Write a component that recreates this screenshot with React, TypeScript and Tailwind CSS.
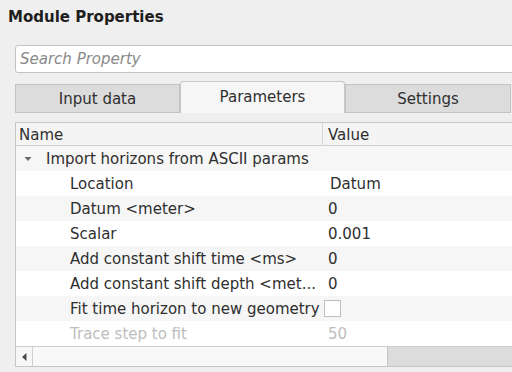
import React from 'react';

type Row = {
  name: string;
  value?: string;
  checkbox?: boolean;
  disabled?: boolean;
  valueIndent?: boolean;
};

const rows: Row[] = [
  { name: 'Location', value: 'Datum', valueIndent: true },
  { name: 'Datum <meter>', value: '0' },
  { name: 'Scalar', value: '0.001' },
  { name: 'Add constant shift time <ms>', value: '0' },
  { name: 'Add constant shift depth <met...', value: '0' },
  { name: 'Fit time horizon to new geometry', checkbox: true },
  { name: 'Trace step to fit', value: '50', disabled: true },
];

export default function App() {
  return (
    <div
      className="relative h-[372px] w-[512px] overflow-hidden bg-[#efefef] text-[15px] text-[#2f2f2f]"
      style={{ fontFamily: '"DejaVu Sans", "Liberation Sans", sans-serif' }}
    >
      <div className="px-[8px] pt-[7px] text-[15px] font-bold leading-[20px] text-[#1e1e1e]">
        Module Properties
      </div>

      <div className="ml-[15px] w-[520px]">
        {/* search */}
        <div className="mt-[18px] flex h-[28px] items-center rounded-[3px] border border-[#c3c3c3] bg-white px-[4px] pt-[1px]">
          <span className="italic text-[#8a8a8a]">Search Property</span>
        </div>

        {/* tabs */}
        <div className="mt-[8px] flex h-[32px] w-[496px] items-end">
          <div className="flex h-[29px] w-[165px] items-center justify-center border border-[#c2c2c2] bg-[#dcdcdc] pt-[2px] text-[#2f2f2f]">
            Input data
          </div>
          <div className="flex h-[32px] w-[165px] items-center justify-center rounded-t-[3px] border border-b-0 border-[#c9c9c9] bg-[#f6f6f6] text-[#2f2f2f]">
            Parameters
          </div>
          <div className="flex h-[29px] w-[166px] items-center justify-center border border-[#c2c2c2] bg-[#dcdcdc] pt-[2px] text-[#2f2f2f]">
            Settings
          </div>
        </div>

        {/* table */}
        <div className="mt-[9px] h-[245px] border border-[#c6c6c6] bg-white">
          <div className="flex h-[23px] border-b border-[#d0d0d0] bg-[#f4f4f4]">
            <div className="flex w-[307px] items-center border-r border-[#d6d6d6] pl-[3px] pt-[3px]">Name</div>
            <div className="flex items-center pl-[5px] pt-[3px]">Value</div>
          </div>

          <div className="flex h-[25px] items-center whitespace-nowrap bg-[#f6f6f6] pt-[2px]">
            <svg width="8" height="6" viewBox="0 0 8 6" className="ml-[8px] mr-[14px] mb-[2px] shrink-0">
              <path d="M0.5 1 L7.5 1 L4 5 Z" fill="#6a6a6a" />
            </svg>
            <span>Import horizons from ASCII params</span>
          </div>

          {rows.map((r, i) => (
            <div
              key={r.name}
              className={`flex h-[25px] items-center ${i % 2 === 1 ? 'bg-[#f6f6f6]' : 'bg-white'}`}
            >
              <div
                className={`w-[308px] shrink-0 overflow-hidden whitespace-nowrap pl-[54px] pt-[2px] ${
                  r.disabled ? 'text-[#bdbdbd]' : ''
                }`}
              >
                {r.name}
              </div>
              {r.checkbox ? (
                <div className="h-[17px] w-[17px] border border-[#bfbfbf] bg-white" />
              ) : (
                <div
                  className={`pt-[2px] ${r.valueIndent ? 'pl-[6px]' : 'pl-[4px]'} ${
                    r.disabled ? 'text-[#bdbdbd]' : ''
                  }`}
                >
                  {r.value}
                </div>
              )}
            </div>
          ))}

          {/* horizontal scrollbar */}
          <div className="flex h-[20px] border-t border-[#cfcfcf]">
            <div className="flex w-[17px] items-center justify-center border-r border-[#d0d0d0] bg-[#f7f7f7]">
              <svg width="5" height="8" viewBox="0 0 5 8">
                <path d="M4.5 0 L0 4 L4.5 8 Z" fill="#4a4a4a" />
              </svg>
            </div>
            <div className="w-[355px] border-r border-[#c4c4c4] bg-[#f8f8f8]" />
            <div className="flex-1 bg-[#dcdcdc]" />
          </div>
        </div>
      </div>
    </div>
  );
}
